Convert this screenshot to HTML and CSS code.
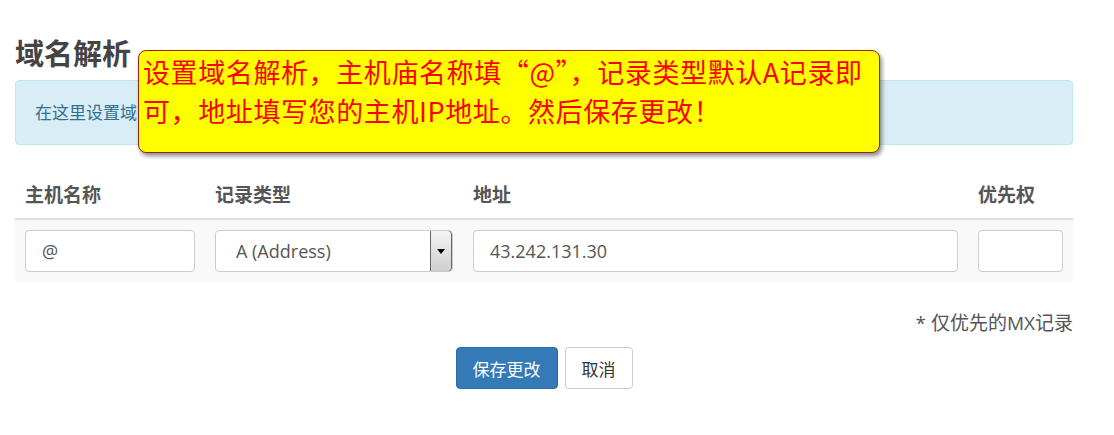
FILE: index.html
```html
<!DOCTYPE html>
<html lang="zh-CN">
<head>
  <meta charset="UTF-8">
  <title>域名解析</title>
  <link rel="stylesheet" href="styles.css">
</head>
<body>
  <div class="page">
    <h2 class="title">域名解析</h2>
    <div class="alert">在这里设置域名解析记录，修改后请点击保存更改。</div>

    <div class="tip">设置域名解析，主机庙名称填“@”，记录类型默认A记录即可，地址填写您的主机IP地址。然后保存更改！</div>

    <table class="records">
      <thead>
        <tr>
          <th class="col-host">主机名称</th>
          <th class="col-type">记录类型</th>
          <th class="col-addr">地址</th>
          <th class="col-prio">优先权</th>
        </tr>
      </thead>
      <tbody>
        <tr>
          <td><input class="field" type="text" value="@"></td>
          <td>
            <div class="field select">
              <span>A (Address)</span>
              <span class="arrow"></span>
            </div>
          </td>
          <td><input class="field" type="text" value="43.242.131.30"></td>
          <td><input class="field" type="text" value=""></td>
        </tr>
      </tbody>
    </table>

    <p class="note">* 仅优先的MX记录</p>

    <div class="actions">
      <button class="btn btn-primary">保存更改</button>
      <button class="btn">取消</button>
    </div>
  </div>
</body>
</html>
```

FILE: styles.css
```css
body {
  margin: 0;
  font-family: "Open Sans", "Noto Sans CJK SC", sans-serif;
  font-size: 18px;
  color: #333;
  background: #fff;
}
.page {
  position: relative;
  width: 1058px;
  margin-left: 15px;
}
.title {
  margin: 0;
  padding-top: 36px;
  font-size: 29px;
  line-height: 36px;
  font-weight: bold;
  color: #444;
}
.alert {
  margin-top: 8px;
  padding: 0 19px;
  height: 63px;
  line-height: 63px;
  background: #d9edf7;
  border: 1px solid #bce8f1;
  border-radius: 4px;
  color: #31708f;
  font-size: 17px;
}
.tip {
  position: absolute;
  left: 123px;
  top: 50px;
  width: 732px;
  height: 97px;
  padding: 1px 4px 3px;
  background: #ffff00;
  border: 1px solid #a0201a;
  border-radius: 8px;
  box-shadow: 2px 3px 4px rgba(0, 0, 0, 0.45);
  color: #f00;
  font-family: "Noto Sans CJK SC", sans-serif;
  font-size: 27px;
  line-height: 39px;
  letter-spacing: 0.6px;
}
.records {
  width: 100%;
  margin-top: 35px;
  border-collapse: collapse;
}
.records th {
  text-align: left;
  font-size: 19px;
  font-weight: bold;
  color: #555;
  padding: 0 10px 10px;
  border-bottom: 2px solid #ddd;
}
.records td {
  padding: 10px;
  background: #f9f9f9;
}
.col-host { width: 170px; }
.col-type { width: 238px; }
.col-addr { width: 485px; }
.field {
  box-sizing: border-box;
  width: 100%;
  height: 42px;
  padding: 0 16px;
  border: 1px solid #ccc;
  border-radius: 4px;
  background: #fff;
  font-family: inherit;
  font-size: 18px;
  color: #555;
}
.select {
  display: flex;
  align-items: center;
  justify-content: space-between;
  padding: 0 0 0 20px;
  overflow: hidden;
}
.arrow {
  position: relative;
  box-sizing: border-box;
  width: 22px;
  height: 42px;
  border: 1px solid #666;
  border-radius: 0 4px 4px 0;
  background: linear-gradient(#f4f4f4, #cfcfcf);
}
.arrow::after {
  content: "";
  position: absolute;
  left: 6px;
  top: 18px;
  border-left: 4px solid transparent;
  border-right: 4px solid transparent;
  border-top: 5px solid #000;
}
.note {
  margin: 26px 0 0;
  text-align: right;
  font-size: 19px;
  color: #555;
}
.actions {
  display: flex;
  justify-content: center;
  gap: 7px;
  margin-top: 11px;
}
.btn {
  height: 42px;
  padding: 0 16px;
  border: 1px solid #ccc;
  border-radius: 4px;
  background: #fff;
  font-family: inherit;
  font-size: 17px;
  color: #333;
}
.btn-primary {
  background: #337ab7;
  border-color: #2e6da4;
  color: #fff;
}
```
